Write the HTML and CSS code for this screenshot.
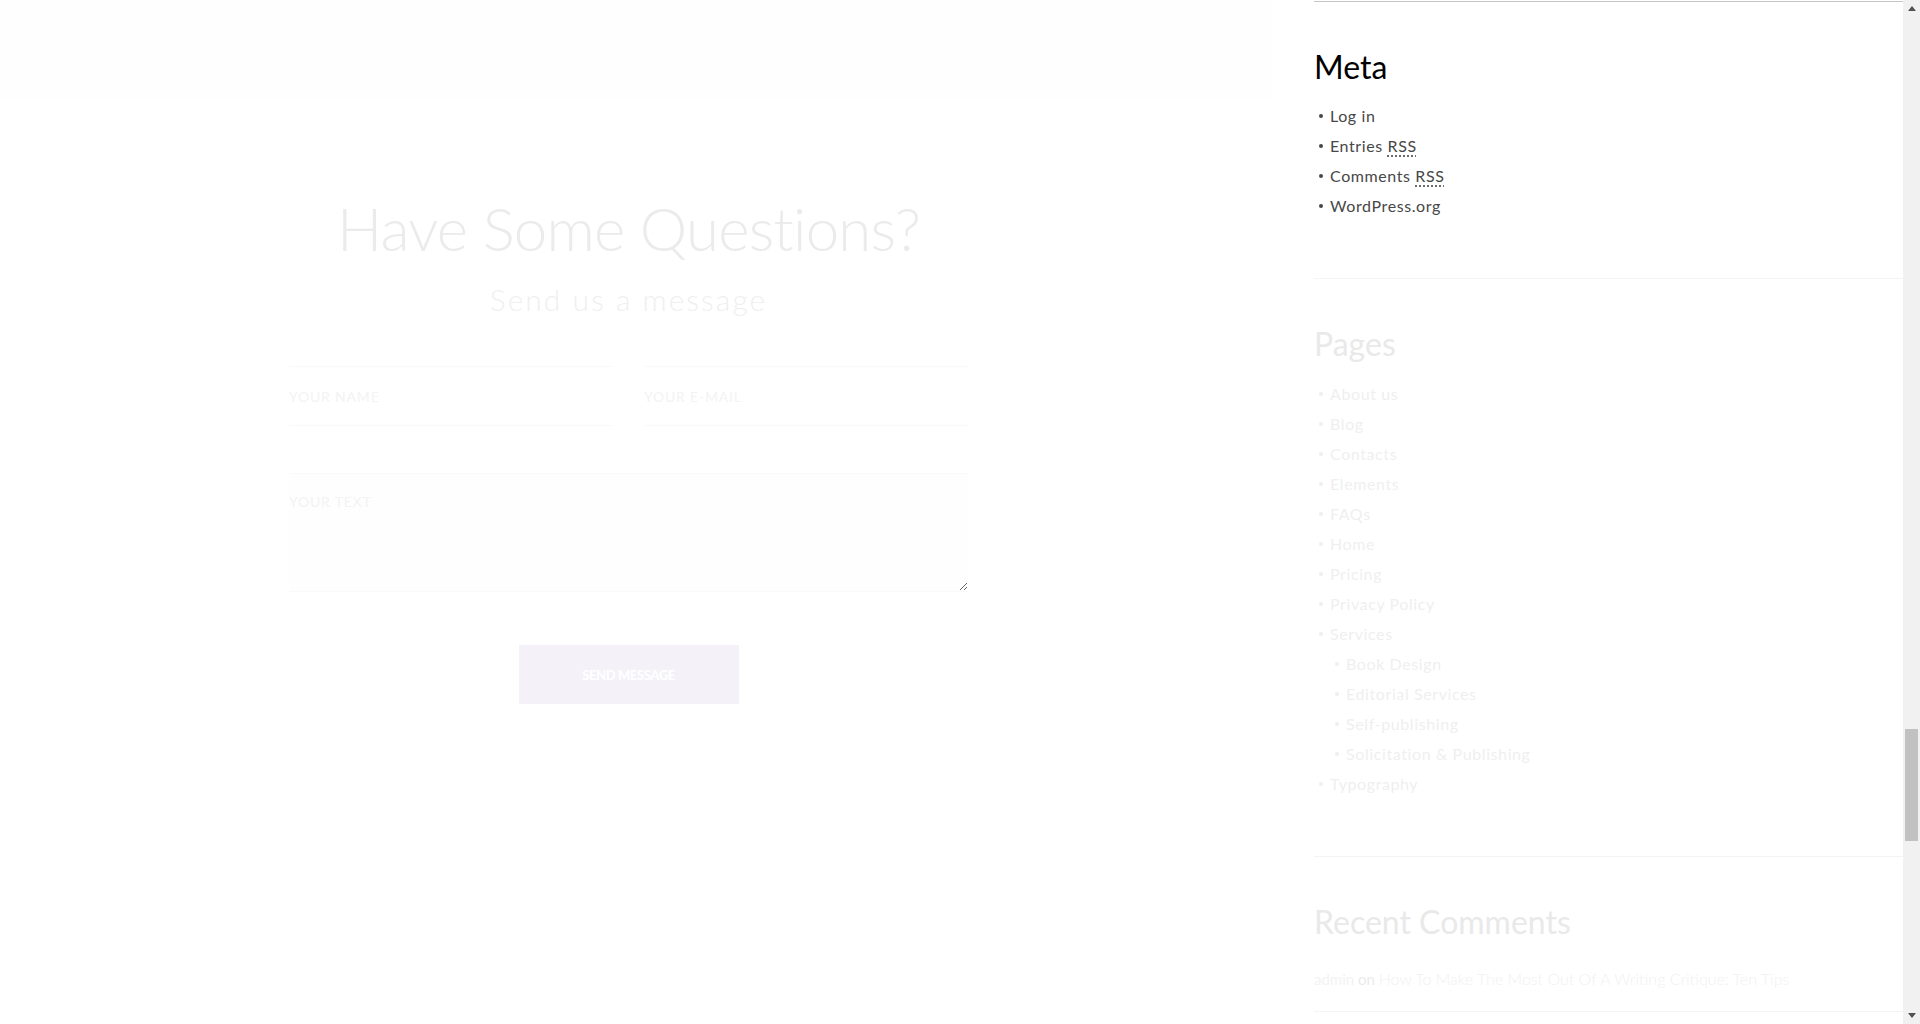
FILE: index.html
```html
<!DOCTYPE html>
<html lang="en">
<head>
<meta charset="utf-8">
<title>Contacts</title>
<link rel="stylesheet" href="styles.css">
</head>
<body>
<div class="page">
  <main class="main">
    <div class="band"></div>
    <section class="contact">
      <h2 class="contact-title">Have Some Questions?</h2>
      <p class="contact-sub">Send us a message</p>
      <form class="contact-form">
        <div class="row">
          <input class="field" type="text" placeholder="YOUR NAME">
          <input class="field" type="email" placeholder="YOUR E-MAIL">
        </div>
        <textarea class="field area" placeholder="YOUR TEXT"></textarea>
        <div class="actions"><button type="button" class="send">SEND MESSAGE</button></div>
      </form>
    </section>
  </main>

  <aside class="sidebar">
    <div class="top-rule"></div>
    <div class="widget meta">
      <h3 class="widget-title">Meta</h3>
      <ul class="links">
        <li><a href="#">Log in</a></li>
        <li><a href="#">Entries <abbr title="Really Simple Syndication">RSS</abbr></a></li>
        <li><a href="#">Comments <abbr title="Really Simple Syndication">RSS</abbr></a></li>
        <li><a href="#">WordPress.org</a></li>
      </ul>
    </div>
    <div class="widget faded">
      <h3 class="widget-title">Pages</h3>
      <ul class="links">
        <li><a href="#">About us</a></li>
        <li><a href="#">Blog</a></li>
        <li><a href="#">Contacts</a></li>
        <li><a href="#">Elements</a></li>
        <li><a href="#">FAQs</a></li>
        <li><a href="#">Home</a></li>
        <li><a href="#">Pricing</a></li>
        <li><a href="#">Privacy Policy</a></li>
        <li><a href="#">Services</a>
          <ul class="links sub">
            <li><a href="#">Book Design</a></li>
            <li><a href="#">Editorial Services</a></li>
            <li><a href="#">Self-publishing</a></li>
            <li><a href="#">Solicitation &amp; Publishing</a></li>
          </ul>
        </li>
        <li><a href="#">Typography</a></li>
      </ul>
    </div>
    <div class="widget faded comments">
      <h3 class="widget-title">Recent Comments</h3>
      <p class="comment"><span class="author">admin</span> <span class="on">on</span> <a class="post" href="#">How To Make The Most Out Of A Writing Critique: Ten Tips</a></p>
    </div>
  </aside>

  <div class="scrollbar">
    <div class="sb-btn"><svg width="8" height="5" viewBox="0 0 8 5"><path d="M0 5 L4 0 L8 5 Z" fill="#505050"/></svg></div>
    <div class="sb-thumb"></div>
    <div class="sb-btn down"><svg width="8" height="5" viewBox="0 0 8 5"><path d="M0 0 L8 0 L4 5 Z" fill="#505050"/></svg></div>
  </div>
</div>
</body>
</html>
```

FILE: styles.css
```css
html, body {
  margin: 0;
  padding: 0;
  height: 1024px;
  overflow: hidden;
  background: #ffffff;
}

.page {
  display: flex;
  height: 1024px;
  font-family: Lato, "Open Sans", sans-serif;
}

/* ---------- main column ---------- */
.main {
  flex: 0 0 1273px;
}

.band {
  height: 98px;
  background: #fefefe;
}

.contact {
  padding: 94px 16px 0 0;
  display: flex;
  flex-direction: column;
  align-items: center;
}

.contact-title {
  margin: 0;
  font-family: Lato, sans-serif;
  font-weight: 300;
  font-size: 60px;
  line-height: 72px;
  color: #ebebeb;
  letter-spacing: -0.8px;
}

.contact-sub {
  margin: 17px 0 0;
  font-family: Lato, sans-serif;
  font-weight: 300;
  font-size: 30px;
  line-height: 36px;
  color: #efefef;
  letter-spacing: 2px;
}

.contact-form {
  width: 679px;
  margin-top: 49px;
}

.row {
  display: flex;
  gap: 31px;
}

.field {
  flex: 1;
  min-width: 0;
  box-sizing: border-box;
  height: 60px;
  margin: 0;
  padding: 0;
  border: 0;
  border-top: 1px solid #f9f9f9;
  border-bottom: 1px solid #f9f9f9;
  background: transparent;
  font-family: Lato, sans-serif;
  font-size: 14px;
  letter-spacing: 0.8px;
  color: #777;
  outline: none;
}

.field::placeholder {
  color: #f3f3f3;
  opacity: 1;
}

.area {
  display: block;
  width: 679px;
  height: 119px;
  margin-top: 47px;
  padding-top: 19px;
  background: #fefefe;
  line-height: normal;
}

.actions {
  display: flex;
  justify-content: center;
  margin-top: 53px;
}

.send {
  width: 220px;
  height: 59px;
  border: 0;
  background: #f4f2f8;
  color: #ffffff;
  font-family: Lato, sans-serif;
  font-weight: 900;
  font-size: 13px;
  letter-spacing: -0.4px;
  cursor: pointer;
}

/* ---------- sidebar ---------- */
.sidebar {
  flex: 0 0 589px;
  margin-left: 41px;
}

.top-rule {
  height: 1px;
  margin-top: 1px;
  background: #c6c6c6;
}

.widget {
  padding: 43px 0 57px;
  border-bottom: 1px solid #f4f4f4;
}

.widget-title {
  margin: 0;
  padding-top: 3px;
  font-family: Lato, sans-serif;
  font-weight: 400;
  font-size: 32px;
  line-height: 38.4px;
  color: #000000;
}

.links {
  list-style: none;
  margin: 15px 0 0;
  padding: 0;
  font-size: 16px;
  line-height: 30px;
  letter-spacing: 0.6px;
}

.links li {
  position: relative;
  padding-left: 16px;
}

.links li::before {
  content: "";
  position: absolute;
  left: 5px;
  top: 13px;
  width: 4px;
  height: 4px;
  border-radius: 50%;
  background: currentColor;
}

.links.sub {
  margin: 0;
}

.links a {
  color: inherit;
  text-decoration: none;
}

.links abbr {
  text-decoration: underline dotted;
  text-underline-offset: 3px;
}

.meta .links {
  color: #474747;
}

.faded .widget-title {
  color: #e9e9e9;
}

.faded .links {
  color: #efefef;
}

.comments {
  padding-bottom: 17px;
}

.comment {
  margin: 23px 0 0;
  font-size: 15px;
  line-height: 30px;
  color: #f3f3f3;
}

.comment .on {
  color: #ebebeb;
}

.comment .post {
  color: #f1f1f1;
  text-decoration: none;
  font-weight: 300;
  font-size: 16px;
  letter-spacing: 0;
}

/* ---------- scrollbar ---------- */
.scrollbar {
  flex: 0 0 17px;
  background: #f1f1f1;
  display: flex;
  flex-direction: column;
  align-items: center;
}

.sb-btn {
  width: 17px;
  height: 17px;
  display: flex;
  align-items: center;
  justify-content: center;
}

.sb-btn.down {
  margin-top: auto;
}

.sb-thumb {
  width: 13px;
  height: 112px;
  margin-top: 712px;
  background: #c1c1c1;
}
```
